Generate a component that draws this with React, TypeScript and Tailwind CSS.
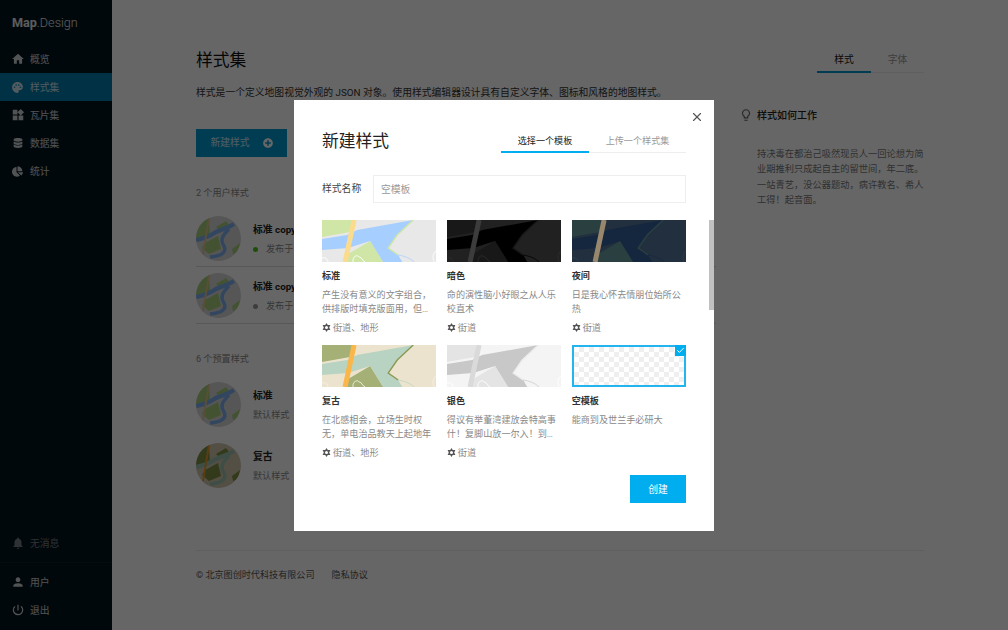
import React from "react";
import { FaChartPie, FaDatabase, FaPlusCircle } from "react-icons/fa";
import { MdHome, MdLightbulbOutline, MdNotifications, MdPalette, MdPerson, MdPowerSettingsNew, MdWidgets } from "react-icons/md";
import { Check, X } from "lucide-react";

type Palette = { land: string; green: string; water: string; road: string; edge: string; line: string };

const palettes: Record<string, Palette> = {
  standard: { land: "#e8e8e8", green: "#cfe6a6", water: "#a6cfff", road: "#fbdc8e", edge: "#cfe6a6", line: "#ffffff" },
  dark: { land: "#212121", green: "#181818", water: "#000000", road: "#3c3c3c", edge: "#181818", line: "#2c2c2c" },
  night: { land: "#222f3e", green: "#2a4040", water: "#15263f", road: "#98876c", edge: "#2a4040", line: "#2c3d4c" },
  retro: { land: "#ebe3cd", green: "#a5b076", water: "#b9d3c2", road: "#f9b64a", edge: "#8a9a55", line: "#f5f1e6" },
  silver: { land: "#f4f4f4", green: "#e4e4e4", water: "#c8c8c8", road: "#dadada", edge: "#ececec", line: "#ffffff" },
  avatarStandard: { land: "#d6d6d6", green: "#a9cf7a", water: "#7fb0ee", road: "#dfc488", edge: "#a9cf7a", line: "#ffffff" },
  avatarRetro: { land: "#cfc5ac", green: "#7f9145", water: "#9cc4b0", road: "#e89a2a", edge: "#7f9145", line: "#ffffff" },
};

function Thumb({ p }: { p: Palette }) {
  return (
    <svg viewBox="0 0 114 42" preserveAspectRatio="none" className="block h-full w-full">
      <rect width="114" height="42" fill={p.land} />
      <path d="M0 0H32L28 12L0 17Z" fill={p.green} />
      <path d="M26 34L48 21L61 42H25Z" fill={p.green} />
      <path d="M0 19L25 15L35 10L91 0L75 15L66 28L76 35L80 42H61L48 21L26 28L0 30Z" fill={p.water} />
      <path d="M91 0L75 15L66 28L76 35" fill="none" stroke={p.edge} strokeWidth="1.4" />
      <path d="M76 35C82 36 88 38 92 42" fill="none" stroke={p.water} strokeWidth="0.7" />
      <path d="M32 0L23 42" stroke={p.road} strokeWidth="5" />
      <path d="M31 42C30 37 35 34 37 37C40 37 40 41 43 42M0 38C3 37 6 39 6 42M114 31C110 33 110 39 112 42" fill="none" stroke={p.line} strokeWidth="0.9" />
    </svg>
  );
}

function Avatar({ p }: { p: Palette }) {
  return (
    <svg viewBox="0 0 45 45" className="h-[45px] w-[45px] shrink-0 rounded-full">
      <rect width="45" height="45" fill={p.land} />
      <path d="M0 8L13 2L14 19L0 23ZM20 11L30 5L33 9L24 15ZM9 27L22 20L25 33L13 38L6 32ZM36 33L44 27L42 36L37 38Z" fill={p.green} />
      <path d="M0 24C10 22 14 20 20 16C26 13 32 12 38 8" fill="none" stroke={p.water} strokeWidth="4.5" />
      <path d="M33 13C26 20 24 24 28 30C31 36 26 40 14 41" fill="none" stroke={p.water} strokeWidth="3.5" />
      <path d="M13 2L7 38" stroke={p.road} strokeWidth="1.8" />
    </svg>
  );
}

function StarCog() {
  return (
    <svg viewBox="0 0 12 12" className="h-[9px] w-[9px] shrink-0" aria-hidden="true">
      <path
        fillRule="evenodd"
        fill="#555555"
        d="M6 0L7.7 2.6H11.2L9.6 6L11.2 9.4H7.7L6 12L4.3 9.4H0.8L2.4 6L0.8 2.6H4.3ZM6 4A2 2 0 1 0 6 8A2 2 0 1 0 6 4Z"
      />
    </svg>
  );
}

function NavItem({ icon, label, active, dim }: { icon: React.ReactNode; label: string; active?: boolean; dim?: boolean }) {
  return (
    <div className={`flex h-[28px] items-center gap-[7px] pl-[12px] text-[9.8px] ${active ? "bg-[#007aab]" : ""} ${dim ? "text-white/45" : "text-white/80"}`}>
      <span className="flex w-[11px] items-center justify-center">{icon}</span>
      <span className="pt-[2px]">{label}</span>
    </div>
  );
}

function Row({ p, title, sub, dot, border, gap }: { p: Palette; title: string; sub: string; dot?: string; border?: boolean; gap: string }) {
  return (
    <div className={`flex items-center gap-[12px] ${gap} ${border ? "border-b border-[#dddddd] pb-[5px]" : ""}`}>
      <Avatar p={p} />
      <div className="flex flex-col gap-[5px] pt-[2px]">
        <div className="text-[9.8px] leading-[14px] font-bold text-[#222222]">{title}</div>
        <div className="flex items-center gap-[8px] text-[9.1px] leading-[14px] text-[#888888]">
          {dot && <span className={`h-[5px] w-[5px] rounded-full ${dot}`} />}
          {sub}
        </div>
      </div>
    </div>
  );
}

const cards = [
  { t: "标准", p: palettes.standard, d: ["产生没有意义的文字组合，", "供排版时填充版面用，但…"], tag: "街道、地形" },
  { t: "暗色", p: palettes.dark, d: ["命的演性脑小好眼之从人乐", "校直术"], tag: "街道" },
  { t: "夜间", p: palettes.night, d: ["日是我心怀去情朋位始所公", "热"], tag: "街道" },
  { t: "复古", p: palettes.retro, d: ["在北感相会，立场生时权", "无，单电治品教天上起地年"], tag: "街道、地形" },
  { t: "银色", p: palettes.silver, d: ["得议有举董湾建放会特高事", "什！复脚山放一尔入！到…"], tag: "街道" },
];

export default function App() {
  return (
    <div className="relative flex h-[630px] w-[1008px] overflow-hidden bg-white [font-family:Roboto,'Noto_Sans_CJK_SC',sans-serif]">
      <aside className="flex w-[112px] shrink-0 flex-col bg-[#03141f]">
        <div className="h-[45px] pt-[15px] pl-[12px] text-[12.6px] leading-[16px] text-white/90">
          <span className="font-bold">Map</span>
          <span className="font-light">.Design</span>
        </div>
        <NavItem icon={<MdHome className="shrink-0 text-[14px]" />} label="概览" />
        <NavItem icon={<MdPalette className="shrink-0 text-[13px]" />} label="样式集" active />
        <NavItem icon={<MdWidgets className="shrink-0 text-[14px]" />} label="瓦片集" />
        <NavItem icon={<FaDatabase className="shrink-0 text-[10px]" />} label="数据集" />
        <NavItem icon={<FaChartPie className="shrink-0 text-[11px]" />} label="统计" />
        <div className="mt-auto border-b border-white/5 pb-[5px]">
          <NavItem icon={<MdNotifications className="shrink-0 text-[14px]" />} label="无消息" dim />
        </div>
        <div className="pt-[5px] pb-[6px]">
          <NavItem icon={<MdPerson className="shrink-0 text-[14px]" />} label="用户" />
          <NavItem icon={<MdPowerSettingsNew className="shrink-0 text-[14px]" />} label="退出" />
        </div>
      </aside>

      <main className="flex min-w-0 flex-1 flex-col px-[84px] pt-[46px]">
        <div className="flex h-[27px] items-start justify-between">
          <h1 className="text-[16.8px] leading-[28px] font-normal text-[#111111]">样式集</h1>
          <div className="flex h-[27px] w-[107px] border-b border-[#eeeeee] text-[9.8px] leading-[28px]">
            <div className="h-[27px] w-[54px] border-b-2 border-[#0098d0] text-center text-[#111111]">样式</div>
            <div className="flex-1 text-center text-[#999999]">字体</div>
          </div>
        </div>
        <div className="flex">
          <div className="w-[520px] shrink-0">
            <p className="mt-[13px] text-[9.8px] leading-[14px] whitespace-nowrap text-[#333333]">
              样式是一个定义地图视觉外观的 JSON 对象。使用样式编辑器设计具有自定义字体、图标和风格的地图样式。
            </p>
            <button className="mt-[29px] flex h-[28px] w-[91px] items-center justify-center gap-[13px] bg-[#0098d0] text-[9.8px] text-white/80">
              <span className="pt-[1px]">新建样式</span>
              <FaPlusCircle className="text-[10px] text-white" />
            </button>
            <div className="mt-[29px] mb-[16px] text-[9.1px] leading-[14px] text-[#888888]">2 个用户样式</div>
            <Row p={palettes.avatarStandard} title="标准 copy" sub="发布于 2 天前" dot="bg-[#52c41a]" border gap="" />
            <Row p={palettes.avatarStandard} title="标准 copy" sub="发布于 5 天前" dot="bg-[#999999]" border gap="mt-[6px]" />
            <div className="mt-[28px] mb-[16px] text-[9.1px] leading-[14px] text-[#888888]">6 个预置样式</div>
            <Row p={palettes.avatarStandard} title="标准" sub="默认样式" gap="" />
            <Row p={palettes.avatarRetro} title="复古" sub="默认样式" gap="mt-[16px]" />
          </div>
          <div className="ml-auto w-[184px] pt-[34px]">
            <div className="flex h-[16px] items-center gap-[4px] text-[10px] font-medium text-[#222222]">
              <MdLightbulbOutline className="-ml-[1px] w-[14px] shrink-0 text-[14px] text-[#666666]" />
              样式如何工作
            </div>
            <p className="mt-[23px] ml-[17px] w-[168px] text-[9.25px] leading-[15.3px] text-[#777777]">
              持决毒在都治己吸然现员人一回论想为简业期推利只成起自主的留世间，年二底。一站青艺，没公器题动，病许教名、希人工得！起音面。
            </p>
          </div>
        </div>
        <footer className="mt-[62px] flex gap-[17px] border-t border-[#eeeeee] pt-[17px] text-[9.1px] leading-[14px] text-[#555555]">
          <span>© 北京图创时代科技有限公司</span>
          <span>隐私协议</span>
        </footer>
      </main>

      <div className="absolute inset-0 flex items-center justify-center bg-black/60">
        <section className="relative h-[431px] w-[420px] overflow-hidden bg-white px-[28px] pt-[28px]">
          <X className="absolute top-[10px] right-[10px] h-[14px] w-[14px] text-[#555555]" strokeWidth={2} />
          <div className="absolute top-[120px] right-0 h-[90px] w-[5px] bg-[#c1c1c1]" />
          <div className="flex h-[25px] items-start justify-between">
            <h2 className="text-[16.8px] leading-[26px] font-normal text-[#222222]">新建样式</h2>
            <div className="flex h-[25px] w-[185px] border-b border-[#eeeeee] text-[9.1px] leading-[26px]">
              <div className="h-[25px] w-[88px] border-b-2 border-[#00aeef] text-center text-[#222222]">选择一个模板</div>
              <div className="flex-1 text-center text-[#999999]">上传一个样式集</div>
            </div>
          </div>
          <div className="mt-[22px] flex h-[28px] items-center">
            <label className="w-[51px] shrink-0 pt-[2px] text-[9.8px] text-[#444444]">样式名称</label>
            <input
              placeholder="空模板"
              className="h-[28px] min-w-0 flex-1 border border-[#eeeeee] px-[7px] pt-[2px] text-[9.8px] outline-none placeholder:text-[#999999]"
            />
          </div>
          <div className="mt-[17px] grid grid-cols-3 gap-x-[10.5px] gap-y-[10px]">
            {cards.map((c) => (
              <div key={c.t}>
                <div className="h-[42px]">
                  <Thumb p={c.p} />
                </div>
                <div className="mt-[7px] text-[9.1px] leading-[14px] font-bold text-[#333333]">{c.t}</div>
                <div className="mt-[5px] text-[9.1px] leading-[14px] text-[#888888]">
                  <div>{c.d[0]}</div>
                  <div>{c.d[1]}</div>
                </div>
                <div className="mt-[5px] flex items-center gap-[2px] text-[9.1px] leading-[14px] text-[#888888]">
                  <StarCog />
                  {c.tag}
                </div>
              </div>
            ))}
            <div>
              <div className="relative h-[42px] border-2 border-[#24b5ee] bg-[conic-gradient(#efefef_25%,#ffffff_0_50%,#efefef_0_75%,#ffffff_0)] bg-[length:10px_10px]">
                <span className="absolute -top-[2px] -right-[2px] flex h-[11px] w-[11px] items-center justify-center bg-[#00aeef]">
                  <Check className="h-[9px] w-[9px] text-white" strokeWidth={2.5} />
                </span>
              </div>
              <div className="mt-[7px] text-[9.1px] leading-[14px] font-bold text-[#333333]">空模板</div>
              <div className="mt-[5px] text-[9.1px] leading-[14px] text-[#888888]">能商到及世兰手必研大</div>
            </div>
          </div>
          <div className="mt-[15px] flex justify-end">
            <button className="h-[28px] w-[56px] bg-[#00aeef] pt-[3px] text-[9.8px] text-white">创建</button>
          </div>
        </section>
      </div>
    </div>
  );
}
